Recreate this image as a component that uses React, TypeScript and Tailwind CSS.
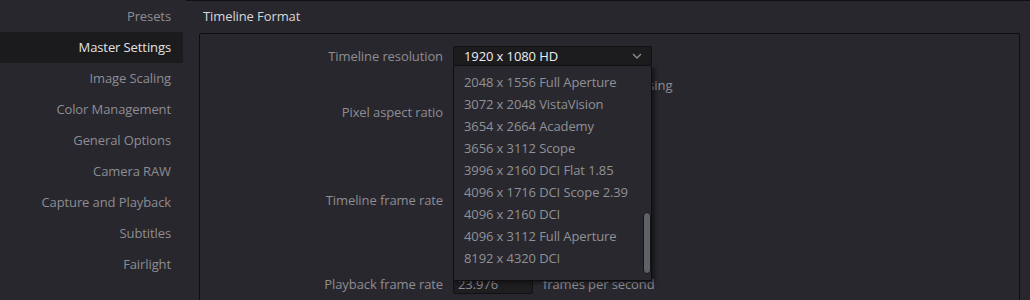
import { useState } from "react"

const navItems = [
  "Presets",
  "Master Settings",
  "Image Scaling",
  "Color Management",
  "General Options",
  "Camera RAW",
  "Capture and Playback",
  "Subtitles",
  "Fairlight",
]

const resolutions = [
  "2048 x 1556 Full Aperture",
  "3072 x 2048 VistaVision",
  "3654 x 2664 Academy",
  "3656 x 3112 Scope",
  "3996 x 2160 DCI Flat 1.85",
  "4096 x 1716 DCI Scope 2.39",
  "4096 x 2160 DCI",
  "4096 x 3112 Full Aperture",
  "8192 x 4320 DCI",
]

function Label({ children }: { children: React.ReactNode }) {
  return <div className="w-[244px] shrink-0 pr-[1px] text-right text-[#8d8d93]">{children}</div>
}

export default function App() {
  const [active, setActive] = useState("Master Settings")

  return (
    <div
      className="flex h-[300px] w-[1030px] overflow-hidden bg-[#28272d] text-[13px] leading-none tracking-[-0.1px]"
      style={{ fontFamily: '"Open Sans", "Noto Sans", sans-serif' }}
    >
      {/* sidebar */}
      <nav className="w-[186px] shrink-0 pt-[1px]">
        {navItems.map((item) => (
          <button
            key={item}
            onClick={() => setActive(item)}
            className={`flex h-[31px] w-[183px] items-center justify-end pr-[12px] ${
              active === item ? "bg-[#1b1b1e] text-[#e2e2e4]" : "text-[#8d8d93]"
            }`}
          >
            {item}
          </button>
        ))}
      </nav>

      {/* content */}
      <div className="flex-1 border-t border-[#111113] pr-[10px]">
        <div className="flex h-[32px] items-center pl-[17px] pb-[1px] text-[#d6d6d8]">Timeline Format</div>
        <div className="ml-[13px] h-[300px] rounded-[2px] border border-[#0e0e10] pt-[12px]">
          {/* timeline resolution */}
          <div className="flex h-[20px] items-center gap-[9px]">
            <Label>Timeline resolution</Label>
            <div className="relative">
              <div className="flex h-[20px] w-[199px] items-center justify-between rounded-[2px] border border-[#111113] bg-[#1c1c1f] pl-[10px] pr-[9px] text-[#ececee]">
                <span>1920 x 1080 HD</span>
                <svg width="10" height="6" viewBox="0 0 10 6" fill="none">
                  <path d="M1 1l4 4 4-4" stroke="#8a8a90" strokeWidth="1.4" />
                </svg>
              </div>
              <div className="absolute left-0 top-full z-10 h-[215px] w-[199px] border border-t-0 border-[#0f0f11] bg-[#29282e] pt-[5px] shadow-[3px_2px_4px_rgba(0,0,0,0.45)]">
                {resolutions.map((r) => (
                  <div key={r} className="flex h-[22px] items-center pl-[10px] text-[#8f9197]">
                    {r}
                  </div>
                ))}
                <div className="absolute left-[189px] top-[146px] h-[62px] w-[8px] rounded-full border border-[#151517] bg-[#5e6167]" />
              </div>
            </div>
          </div>

          {/* partly hidden under the open list */}
          <div className="mt-[9px] flex h-[20px] items-center">
            <div className="ml-[310px] text-[#8d8d93]">For 1920 x 1080 processing</div>
          </div>

          <div className="mt-[7px] flex h-[20px] items-center gap-[9px]">
            <Label>Pixel aspect ratio</Label>
          </div>

          <div className="mt-[68px] flex h-[20px] items-center gap-[9px]">
            <Label>Timeline frame rate</Label>
          </div>

          <div className="mt-[64px] flex h-[20px] items-center gap-[9px]">
            <Label>Playback frame rate</Label>
            <div className="flex h-[20px] w-[80px] items-center rounded-[2px] border border-[#111113] bg-[#1e1e21] pl-[4px] text-[#8d8d93]">
              23.976
            </div>
            <span className="ml-[1px] text-[#8d8d93]">frames per second</span>
          </div>
        </div>
      </div>
    </div>
  )
}
